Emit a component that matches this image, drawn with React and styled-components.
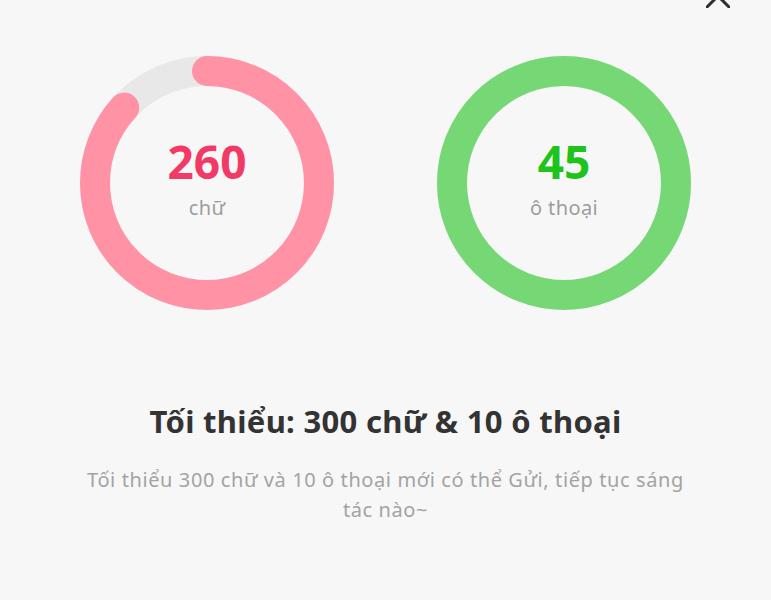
import styled, { createGlobalStyle } from 'styled-components'

const GlobalStyle = createGlobalStyle`
    html, body {
        margin: 0;
        padding: 0;
        background: #f7f7f7;
    }
    body {
        font-family: "Noto Sans", "Open Sans", sans-serif;
    }
`

const Page = styled.div`
    position: relative;
    width: 771px;
    height: 600px;
    overflow: hidden;
    background: #f7f7f7;
    display: flex;
    flex-direction: column;
    align-items: center;
    padding-top: 56px;
    box-sizing: border-box;
`

const CloseButton = styled.button`
    position: absolute;
    top: -16px;
    left: 706px;
    width: 24px;
    height: 24px;
    padding: 0;
    border: none;
    background: none;
    cursor: pointer;
`

const RingRow = styled.div`
    display: flex;
    flex-direction: row;
    gap: 103px;
`

const RingBox = styled.div`
    position: relative;
    width: 254px;
    height: 254px;
`

const RingLabel = styled.div`
    position: absolute;
    inset: 0;
    display: flex;
    flex-direction: column;
    align-items: center;
    justify-content: center;
    padding-bottom: 10px;
`

const Count = styled.div`
    font-size: 46px;
    font-weight: 700;
    line-height: 52px;
    margin-bottom: 8px;
    color: ${props => props.color};
`

const Unit = styled.div`
    font-size: 20px;
    line-height: 26px;
    letter-spacing: 0.4px;
    color: #9d9d9d;
`

const Title = styled.h2`
    margin: 91px 0 0;
    font-size: 31px;
    font-weight: 700;
    line-height: 40px;
    letter-spacing: 0.3px;
    color: #333333;
`

const Description = styled.p`
    margin: 24px 0 0;
    width: 620px;
    text-align: center;
    font-size: 20px;
    line-height: 30px;
    letter-spacing: 0.6px;
    color: #a3a3a3;
`

const Ring = ({ value, max, ringColor, textColor, unit }) => {
    const r = 112
    const length = 2 * Math.PI * r
    const ratio = Math.min(value / max, 1)
    return (
        <RingBox>
            <svg width="254" height="254" viewBox="0 0 254 254">
                <circle cx="127" cy="127" r={r} fill="none" stroke="#e8e8e8" strokeWidth="30" />
                <circle
                    cx="127"
                    cy="127"
                    r={r}
                    fill="none"
                    stroke={ringColor}
                    strokeWidth="30"
                    strokeLinecap="round"
                    strokeDasharray={ratio >= 1 ? `${length} 0` : `${length * ratio} ${length}`}
                    transform="rotate(-90 127 127)"
                />
            </svg>
            <RingLabel>
                <Count color={textColor}>{value}</Count>
                <Unit>{unit}</Unit>
            </RingLabel>
        </RingBox>
    )
}

const App = () => (
    <Page>
        <GlobalStyle />
        <CloseButton aria-label="close">
            <svg width="24" height="24" viewBox="0 0 24 24">
                <path d="M1 1 L23 23 M23 1 L1 23" stroke="#2e2e2e" strokeWidth="3" strokeLinecap="round" />
            </svg>
        </CloseButton>
        <RingRow>
            <Ring value={260} max={300} ringColor="#ff93a5" textColor="#f23a66" unit="chữ" />
            <Ring value={45} max={10} ringColor="#76d874" textColor="#1ec31c" unit="ô thoại" />
        </RingRow>
        <Title>Tối thiểu: 300 chữ &amp; 10 ô thoại</Title>
        <Description>
            Tối thiểu 300 chữ và 10 ô thoại mới có thể Gửi, tiếp tục sáng tác nào~
        </Description>
    </Page>
)

export default App
